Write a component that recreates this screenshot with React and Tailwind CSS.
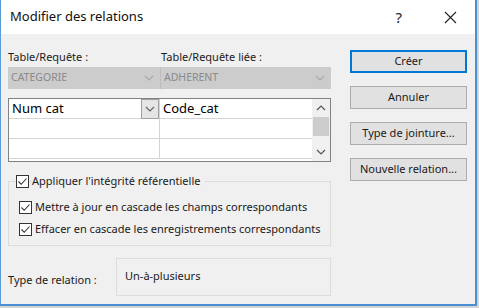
const Chevron = ({ dir = 'down', className = '' }) => (
  <svg width="10" height="6" viewBox="0 0 10 6" className={className}>
    <path
      d={dir === 'down' ? 'M1 1 L5 5 L9 1' : 'M1 5 L5 1 L9 5'}
      fill="none"
      stroke="currentColor"
      strokeWidth="1.2"
    />
  </svg>
);

const Check = ({ label, className = '' }) => (
  <div className={`flex items-center gap-[3px] ${className}`}>
    <div className="flex h-[13px] w-[13px] shrink-0 items-center justify-center border border-[#333] bg-white">
      <svg width="11" height="11" viewBox="0 0 11 11">
        <path d="M1.5 5.5 L4.2 8.3 L9.5 2.5" fill="none" stroke="#333" strokeWidth="1.1" />
      </svg>
    </div>
    <span className="whitespace-nowrap bg-[#f0f0f0] pr-1 text-[11px] leading-[14px] text-[#1a1a1a]">{label}</span>
  </div>
);

const Btn = ({ children, primary }) => (
  <button
    className={`flex h-[23px] w-[117px] items-center justify-center bg-[#e1e1e1] text-[11px] text-[#1a1a1a] ${
      primary ? 'border-2 border-[#0078d7]' : 'border border-[#adadad]'
    }`}
  >
    {children}
  </button>
);

export default function App() {
  return (
    <div className="h-[308px] w-[479px] overflow-hidden bg-[#d4d4d4] font-['Segoe_UI','Noto_Sans',sans-serif]">
      <div className="flex h-[306px] w-[477px] flex-col border-x border-b-2 border-l-[#5b9bd5] border-r-2 border-r-[#4a8fd4] border-b-[#4a8fd4] bg-[#f0f0f0]">
        {/* title bar */}
        <div className="flex h-[34px] shrink-0 items-center bg-white pl-[9px] pr-[18px]">
          <span className="text-[13px] text-[#111]">Modifier des relations</span>
          <span className="ml-auto text-[15px] text-[#222]">?</span>
          <svg width="13" height="13" viewBox="0 0 13 13" className="ml-[42px]">
            <path d="M1 1 L12 12 M12 1 L1 12" stroke="#222" strokeWidth="1.1" />
          </svg>
        </div>

        <div className="flex flex-1 pl-[7px]">
          {/* left column */}
          <div className="flex w-[323px] flex-col">
            <div className="mt-[15px] flex h-[16px] items-center text-[11px] text-[#1a1a1a]">
              <span className="w-[153px]">Table/Requête :</span>
              <span>Table/Requête liée :</span>
            </div>
            <div className="mt-[2px] flex h-[22px] bg-[#cccccc]">
              <div className="flex w-[153px] items-center border-r border-[#bdbdbd] pl-[3px] pr-[6px] text-[10.5px] text-[#8a8a8a]">
                CATEGORIE
                <Chevron className="ml-auto text-[#a8a8a8]" />
              </div>
              <div className="flex flex-1 items-center pl-[3px] pr-[6px] text-[10.5px] text-[#8a8a8a]">
                ADHERENT
                <Chevron className="ml-auto text-[#a8a8a8]" />
              </div>
            </div>

            {/* grid */}
            <div className="mt-[9px] flex h-[64px] border border-[#828282] bg-white">
              <div className="flex flex-1 flex-col">
                <div className="flex h-[20px] border-b border-[#d4d4d4]">
                  <div className="flex w-[151px] items-center border-r border-[#d4d4d4] pl-[3px]">
                    <span className="text-[13px] text-black">Num cat</span>
                    <div className="ml-auto flex h-[20px] w-[18px] items-center justify-center border border-[#a0a0a0] bg-[#e5e5e5] text-[#666]">
                      <Chevron />
                    </div>
                  </div>
                  <div className="flex items-center pl-[3px] text-[13px] text-black">Code_cat</div>
                </div>
                <div className="flex h-[20px] border-b border-[#d4d4d4]">
                  <div className="w-[151px] border-r border-[#d4d4d4]" />
                </div>
                <div className="flex h-[20px] border-b border-[#d4d4d4]">
                  <div className="w-[151px] border-r border-[#d4d4d4]" />
                </div>
              </div>
              <div className="flex w-[18px] flex-col items-center bg-[#f0f0f0] text-[#555]">
                <div className="flex h-[18px] items-center">
                  <Chevron dir="up" />
                </div>
                <div className="h-[19px] w-[16px] bg-[#cdcdcd]" />
                <div className="mt-auto flex h-[18px] items-center">
                  <Chevron />
                </div>
              </div>
            </div>

            {/* options group */}
            <div className="relative mt-[19px] h-[65px] border border-[#dcdcdc]">
              <Check label="Appliquer l'intégrité référentielle" className="absolute left-[7px] top-[-8px]" />
              <div className="mt-[18px] flex flex-col gap-[8px] pl-[10px]">
                <Check label="Mettre à jour en cascade les champs correspondants" />
                <Check label="Effacer en cascade les enregistrements correspondants" />
              </div>
            </div>

            {/* relation type */}
            <div className="mt-[12px] flex items-start">
              <span className="mt-[14px] w-[108px] text-[11px] text-[#1a1a1a]">Type de relation :</span>
              <div className="h-[38px] flex-1 border border-[#dcdcdc] pl-[8px] pt-[9px] text-[11px] text-[#1a1a1a]">
                Un-à-plusieurs
              </div>
            </div>
          </div>

          {/* buttons */}
          <div className="ml-[19px] flex flex-col gap-[13px] pt-[16px]">
            <Btn primary>Créer</Btn>
            <Btn>Annuler</Btn>
            <Btn>Type de jointure...</Btn>
            <Btn>Nouvelle relation...</Btn>
          </div>
        </div>
      </div>
    </div>
  );
}
